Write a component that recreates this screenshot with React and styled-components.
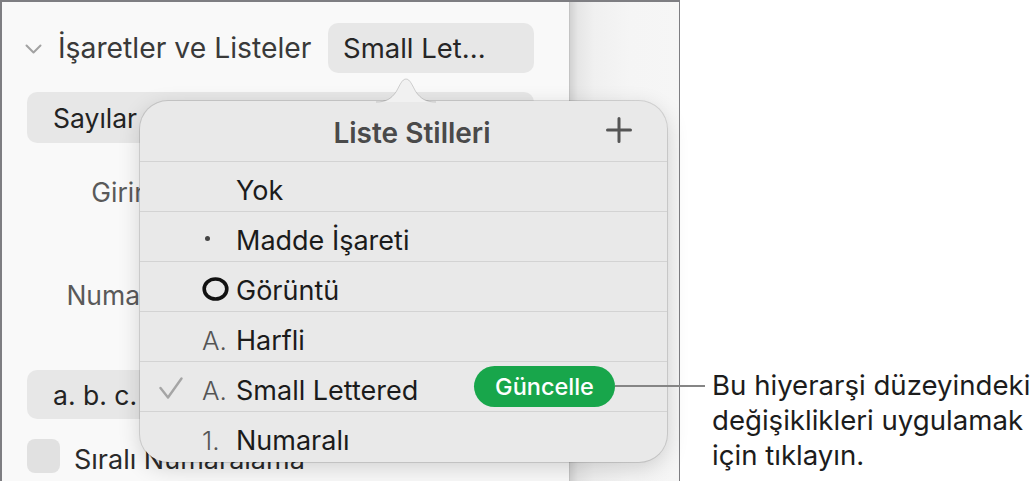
import React from "react";
import styled, { createGlobalStyle } from "styled-components";

const GlobalStyle = createGlobalStyle`
  body {
    margin: 0;
    background: #fff;
    font-family: Inter, "Noto Sans", sans-serif;
    -webkit-font-smoothing: antialiased;
  }
`;

const listStyles = [
  { id: "none", label: "Yok" },
  { id: "bullet", label: "Madde İşareti", marker: "dot" },
  { id: "image", label: "Görüntü", marker: "ring" },
  { id: "lettered", label: "Harfli", prefix: "A." },
  { id: "small", label: "Small Lettered", prefix: "A.", checked: true, update: true },
  { id: "numbered", label: "Numaralı", prefix: "1." },
];

const Chevron = () => (
  <svg width="17" height="10" viewBox="0 0 17 10">
    <path d="M1.5 1.5 L8.5 8.5 L15.5 1.5" fill="none" stroke="#a2a2a2" strokeWidth="2" strokeLinecap="round" strokeLinejoin="round" />
  </svg>
);

const Check = () => (
  <svg width="24" height="22" viewBox="0 0 24 22">
    <path d="M1.5 11 L9 20.5 L22.5 1.5" fill="none" stroke="#a5a5a5" strokeWidth="2.4" strokeLinecap="round" strokeLinejoin="round" />
  </svg>
);

const Ring = () => (
  <svg width="27" height="24" viewBox="0 0 27 24">
    <ellipse cx="13.5" cy="12" rx="11.3" ry="10" fill="none" stroke="#111" strokeWidth="3.6" />
  </svg>
);

const Plus = () => (
  <svg width="26" height="26" viewBox="0 0 26 26">
    <path d="M13 1.5 V24.5 M1.5 13 H24.5" stroke="#555" strokeWidth="3" strokeLinecap="round" />
  </svg>
);

const Arrow = () => (
  <svg width="60" height="26" viewBox="0 0 60 26">
    <path
      d="M0 25 C10 25 15 22 20 15 C24 8 26 2 30 2 C34 2 36 8 40 15 C45 22 50 25 60 25"
      fill="#f1f1f1"
      stroke="rgba(0,0,0,0.16)"
      strokeWidth="1"
    />
  </svg>
);

const App = () => {
  return (
    <Page>
      <GlobalStyle />
      <Frame>
        <Sidebar>
          <SectionHeader>
            <Chevron />
            <SectionTitle>İşaretler ve Listeler</SectionTitle>
            <PopupButton>Small Let...</PopupButton>
          </SectionHeader>
          <SelectBox>Sayılar</SelectBox>
          <Fields>
            <FieldRow>
              <FieldLabel>Girinti</FieldLabel>
            </FieldRow>
            <FieldRow>
              <FieldLabel>Numara</FieldLabel>
            </FieldRow>
          </Fields>
          <SelectBox $top={50} $height={49}>
            a. b. c.
          </SelectBox>
          <CheckRow>
            <CheckBox />
            <CheckLabel>Sıralı Numaralama</CheckLabel>
          </CheckRow>
        </Sidebar>
        <Gutter />

        <Popover>
          <ArrowWrap>
            <Arrow />
          </ArrowWrap>
          <PopoverHeader>
            <span />
            <PopoverTitle>Liste Stilleri</PopoverTitle>
            <AddButton>
              <Plus />
            </AddButton>
          </PopoverHeader>
          {listStyles.map((item) => (
            <StyleRow key={item.id}>
              <CheckCell>{item.checked && <Check />}</CheckCell>
              <MarkerCell>
                {item.marker === "dot" && <Dot />}
                {item.marker === "ring" && <Ring />}
                {item.prefix && <Prefix>{item.prefix}</Prefix>}
              </MarkerCell>
              <StyleLabel>{item.label}</StyleLabel>
              {item.update ? <UpdateButton>Güncelle</UpdateButton> : <span />}
            </StyleRow>
          ))}
        </Popover>
      </Frame>

      <Annotation>
        Bu hiyerarşi düzeyindeki
        <br />
        değişiklikleri uygulamak
        <br />
        için tıklayın.
      </Annotation>
    </Page>
  );
};

const Page = styled.div`
  display: flex;
  width: 1036px;
  height: 481px;
  overflow: hidden;
`;

const Frame = styled.div`
  position: relative;
  display: flex;
  flex-shrink: 0;
  width: 680px;
  height: 481px;
  box-sizing: border-box;
  border: 2px solid #7e7e82;
  border-bottom: none;
  border-right-width: 1.5px;
`;

const Sidebar = styled.div`
  display: flex;
  flex-direction: column;
  width: 568px;
  box-sizing: border-box;
  padding: 21px 35px 0 25px;
  background: #f9f9f9;
  border-right: 1px solid #c4c4c4;
`;

const Gutter = styled.div`
  flex: 1;
  background: linear-gradient(to right, #d2d2d2 0, #e6e6e6 8px, #f0f0f0 24px, #f5f5f5 60px, #f6f6f6 100%);
`;

const SectionHeader = styled.div`
  display: flex;
  align-items: center;
  height: 50px;

  svg {
    margin-left: -2px;
    margin-top: 1px;
  }
`;

const SectionTitle = styled.span`
  margin-left: 16px;
  font-size: 28.3px;
  color: #3a3a3a;
  white-space: nowrap;
`;

const PopupButton = styled.div`
  display: flex;
  align-items: center;
  margin-left: auto;
  width: 206px;
  height: 50px;
  flex-shrink: 0;
  box-sizing: border-box;
  padding-left: 15px;
  border-radius: 10px;
  background: #e7e7e7;
  font-size: 27.5px;
  color: #262626;
`;

const SelectBox = styled.div`
  display: flex;
  align-items: center;
  margin-top: ${(p) => p.$top || 19}px;
  height: ${(p) => p.$height || 51}px;
  padding-left: 26px;
  border-radius: 10px;
  background: #e7e7e7;
  font-size: 26.5px;
  color: #232323;
`;

const Fields = styled.div`
  display: flex;
  flex-direction: column;
  gap: 53px;
  padding-top: 24px;
`;

const FieldRow = styled.div`
  display: grid;
  grid-template-columns: 138px 1fr;
  align-items: center;
  height: 50px;
`;

const FieldLabel = styled.span`
  text-align: right;
  font-size: 26.5px;
  color: #5a5a5a;
`;

const CheckRow = styled.div`
  display: flex;
  align-items: center;
  gap: 14px;
  margin-top: 16px;
`;

const CheckBox = styled.div`
  width: 33px;
  height: 34px;
  border-radius: 8px;
  background: #e1e1e1;
`;

const CheckLabel = styled.span`
  font-size: 27px;
  color: #2a2a2a;
  margin-top: 8px;
  white-space: nowrap;
`;

const Popover = styled.div`
  position: absolute;
  left: 138px;
  top: 99px;
  width: 527px;
  height: 361px;
  border-radius: 28px;
  background: #e9e9e9;
  box-shadow: 0 0 0 1px rgba(0, 0, 0, 0.12), 0 6px 22px rgba(0, 0, 0, 0.16);
`;

const ArrowWrap = styled.div`
  position: absolute;
  top: -24px;
  left: 236px;
  line-height: 0;
`;

const PopoverHeader = styled.div`
  display: grid;
  grid-template-columns: 1fr auto 1fr;
  align-items: center;
  height: 60px;
  padding: 0 35px;
  border-bottom: 1px solid #d3d3d3;
`;

const PopoverTitle = styled.span`
  padding-left: 17px;
  font-size: 28px;
  font-weight: 600;
  color: #4a4a4a;
  margin-top: 3px;
`;

const AddButton = styled.span`
  justify-self: end;
  line-height: 0;
  margin-top: -2px;
`;

const StyleRow = styled.div`
  display: grid;
  grid-template-columns: 43px 34px 1fr auto;
  align-items: center;
  height: 49px;
  padding: 0 52px 0 19px;
  border-bottom: 1px solid #d3d3d3;

  &:last-child {
    border-bottom: none;
  }
`;

const CheckCell = styled.span`
  line-height: 0;
  margin-top: 2px;
`;

const MarkerCell = styled.span`
  display: flex;
  align-items: center;
  line-height: 0;
  margin-top: 4px;
`;

const Dot = styled.span`
  width: 5px;
  height: 5px;
  margin-left: 3px;
  border-radius: 50%;
  background: #444;
`;

const Prefix = styled.span`
  font-size: 26px;
  font-weight: 300;
  line-height: normal;
  color: #555;
  margin-top: 3px;
`;

const StyleLabel = styled.span`
  font-size: 27px;
  color: #1b1b1b;
  margin-top: 7px;
`;

const UpdateButton = styled.span`
  position: relative;
  display: flex;
  align-items: center;
  justify-content: center;
  width: 141px;
  height: 41px;
  border-radius: 21px;
  background: #18a64b;
  font-size: 23.5px;
  font-weight: 500;
  color: #fff;

  &::after {
    content: "";
    position: absolute;
    left: 100%;
    top: 19px;
    width: 90px;
    height: 2px;
    background: #858585;
  }
`;

const Annotation = styled.div`
  margin-left: 32px;
  padding-top: 368px;
  font-size: 27.6px;
  line-height: 35px;
  color: #1c1c1c;
  white-space: nowrap;
`;

export default App;
